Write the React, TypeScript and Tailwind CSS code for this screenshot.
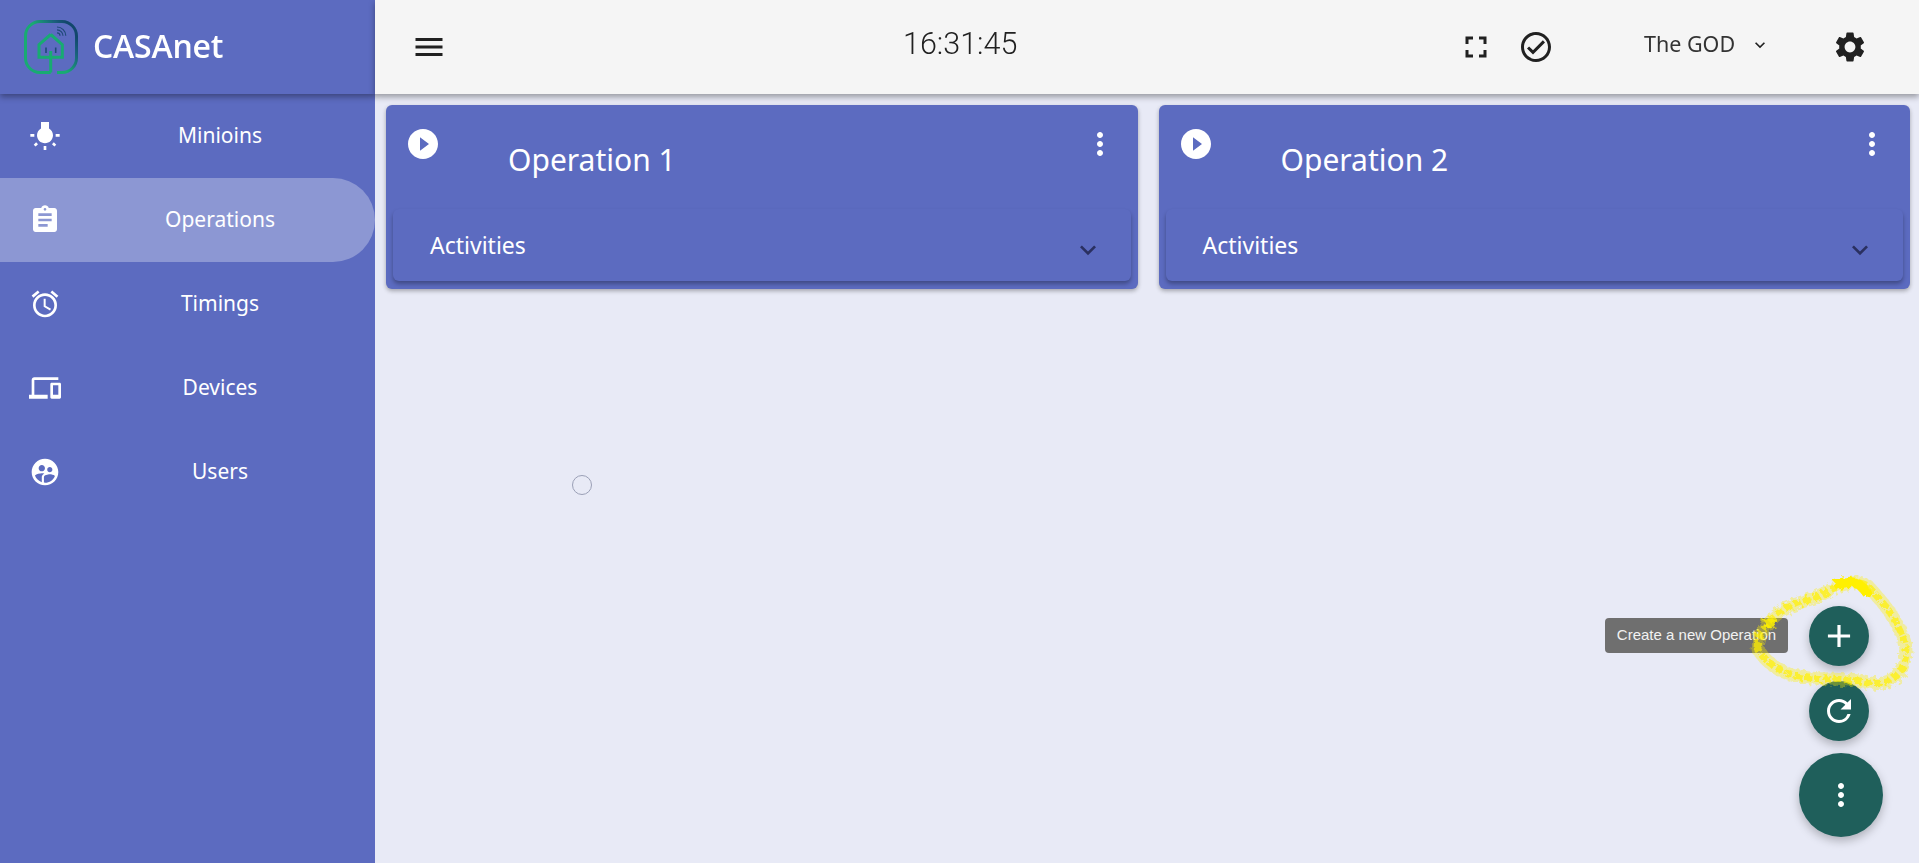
import { ReactNode } from "react";
import {
  MdAccessAlarm,
  MdAdd,
  MdAssignment,
  MdDevices,
  MdExpandMore,
  MdFullscreen,
  MdKeyboardArrowDown,
  MdMenu,
  MdMoreVert,
  MdOutlineCheckCircle,
  MdPlayCircleFilled,
  MdRefresh,
  MdSettings,
  MdSupervisedUserCircle,
  MdWbIncandescent,
} from "react-icons/md";

const NAV: { label: string; icon: ReactNode; active?: boolean }[] = [
  { label: "Minioins", icon: <MdWbIncandescent size={32} /> },
  { label: "Operations", icon: <MdAssignment size={32} />, active: true },
  { label: "Timings", icon: <MdAccessAlarm size={32} /> },
  { label: "Devices", icon: <MdDevices size={32} /> },
  { label: "Users", icon: <MdSupervisedUserCircle size={32} /> },
];

function Logo() {
  return (
    <svg width="54" height="54" viewBox="0 0 54 54" fill="none" className="shrink-0">
      <defs>
        <linearGradient id="logoRing" x1="0" y1="1" x2="1" y2="0.3">
          <stop offset="0.55" stopColor="#18ab72" />
          <stop offset="0.85" stopColor="#1a5f7c" />
          <stop offset="1" stopColor="#12476c" />
        </linearGradient>
      </defs>
      <path
        d="M26.7 52.5H16A14.5 14.5 0 0 1 1.5 38V16A14.5 14.5 0 0 1 16 1.5H38A14.5 14.5 0 0 1 52.5 16V38A14.5 14.5 0 0 1 38 52.5H33"
        stroke="url(#logoRing)"
        strokeWidth="3"
      />
      <path
        d="M26.7 14.5L38.3 24.7V37.3H26.7M26.7 14.5L15 24.7V37.3H26.7M26.7 31V52.5"
        stroke="#18ab72"
        strokeWidth="3"
      />
      <path d="M22 27.5V33M31.7 27.5V33" stroke="#1f4a78" strokeWidth="1.6" />
      <path
        d="M33 12.8a3 3 0 0 1 3 3M33 9.8a6 6 0 0 1 6 6M33 7a8.8 8.8 0 0 1 8.8 8.8"
        stroke="#1f4a78"
        strokeWidth="1.2"
      />
    </svg>
  );
}

function Sidebar() {
  return (
    <aside className="w-[375px] shrink-0 bg-[#5c6bc0] text-white flex flex-col">
      <div className="relative z-10 h-[94px] flex items-center pl-[24px] bg-[#5c6bc0] shadow-[0_3px_6px_rgba(0,0,0,0.35)]">
        <Logo />
        <span className="ml-[15px] mb-[3px] text-[32px] font-semibold font-['Open_Sans',sans-serif] tracking-[-0.2px]">
          CASAnet
        </span>
      </div>
      <nav className="flex flex-col">
        {NAV.map(item => (
          <div
            key={item.label}
            className={`h-[84px] flex items-center rounded-r-[42px] ${item.active ? "bg-[#8c97d3]" : ""}`}
          >
            <div className="w-[90px] flex justify-center">{item.icon}</div>
            <span className="w-[260px] text-center text-[21px] font-['Noto_Sans',sans-serif]">{item.label}</span>
          </div>
        ))}
      </nav>
    </aside>
  );
}

function Header() {
  return (
    <header className="relative z-10 h-[94px] bg-[#f5f5f5] text-[#212121] flex items-center shadow-[0_3px_6px_rgba(0,0,0,0.35)]">
      <MdMenu size={36} className="ml-[36px] shrink-0" />
      <span className="ml-[456px] mb-[6px] w-[116px] text-[30.5px] font-light font-['Roboto',sans-serif] whitespace-nowrap">
        16:31:45
      </span>
      <MdFullscreen size={36} className="ml-[439px] shrink-0" />
      <MdOutlineCheckCircle size={36} className="ml-[24px] shrink-0" />
      <span className="ml-[90px] mb-[6px] w-[100px] text-[21.5px] text-[#333333] font-['Noto_Sans',sans-serif] whitespace-nowrap">
        The GOD
      </span>
      <MdKeyboardArrowDown size={20} className="ml-[6px] mb-[4px] shrink-0" />
      <MdSettings size={36} className="ml-[62px] shrink-0" />
    </header>
  );
}

function OperationCard({ name }: { name: string }) {
  return (
    <div className="h-[184px] rounded-[6px] bg-[#5c6bc0] text-white flex flex-col shadow-[0_2px_4px_rgba(0,0,0,0.3)]">
      <div className="h-[104px] flex items-start justify-between pl-[19px] pr-[20px] pt-[21px]">
        <div className="flex items-start">
          <MdPlayCircleFilled size={36} className="shrink-0" />
          <span className="ml-[67px] mt-[14px] text-[30px] leading-[40px] font-['Noto_Sans',sans-serif]">{name}</span>
        </div>
        <MdMoreVert size={36} className="shrink-0" />
      </div>
      <div className="mx-[7px] h-[72px] rounded-[6px] bg-[#5c6bc0] flex items-center justify-between pl-[37px] pr-[27px] shadow-[0_3px_4px_rgba(0,0,0,0.3)]">
        <span className="text-[23px] font-['Noto_Sans',sans-serif]">Activities</span>
        <MdExpandMore size={32} className="mt-[10px] text-[#2a3060]" />
      </div>
    </div>
  );
}

function Fab({ big, children }: { big?: boolean; children: ReactNode }) {
  return (
    <div
      className={`rounded-full bg-[#1f5f5b] text-white flex items-center justify-center shadow-[0_4px_10px_rgba(0,0,0,0.25)] ${
        big ? "w-[84px] h-[84px]" : "w-[60px] h-[60px] mr-[14px]"
      }`}
    >
      {children}
    </div>
  );
}

function FabStack() {
  return (
    <div className="fixed right-[36px] bottom-[26px] flex flex-col items-end">
      <div className="relative mb-[15px]">
        <div className="absolute right-full top-[12px] mr-[21px] h-[35px] w-[183px] rounded-[4px] bg-[#6f6f6f] text-[#f2f2f2] flex items-center justify-center text-[15px] font-['Liberation_Sans',sans-serif] whitespace-nowrap">
          Create a new Operation
        </div>
        <Fab>
          <MdAdd size={38} />
        </Fab>
      </div>
      <div className="mb-[12px]">
        <Fab>
          <MdRefresh size={36} />
        </Fab>
      </div>
      <Fab big>
        <MdMoreVert size={36} />
      </Fab>
    </div>
  );
}

// marker scribble drawn over the screenshot, around the add button
function Scribble() {
  const d =
    "M1757 648C1757 640 1760 628 1780 612C1800 600 1815 600 1830 590C1845 582 1857 580 1868 586C1880 600 1892 612 1900 630C1908 646 1908 656 1900 672C1890 684 1880 686 1860 681C1835 678 1815 680 1795 676C1780 672 1765 662 1757 648Z";
  return (
    <svg className="fixed inset-0 pointer-events-none" width="1919" height="863" fill="none">
      <defs>
        <filter id="rough" x="1700" y="540" width="219" height="190" filterUnits="userSpaceOnUse">
          <feTurbulence type="fractalNoise" baseFrequency="0.22" numOctaves="2" seed="4" />
          <feDisplacementMap in="SourceGraphic" scale="8" />
        </filter>
      </defs>
      <g filter="url(#rough)" strokeLinejoin="round">
        <path d={d} stroke="#fff200" strokeWidth="13" strokeOpacity="0.35" />
        <path d={d} stroke="#fff000" strokeWidth="7" strokeOpacity="0.7" strokeDasharray="7 3" />
        <path d="M1838 584C1850 580 1860 582 1866 592" stroke="#fff000" strokeWidth="10" strokeLinecap="round" />
        <path d="M1764 624L1776 622" stroke="#fff000" strokeWidth="8" strokeOpacity="0.8" />
      </g>
    </svg>
  );
}

export default function App() {
  return (
    <div className="w-full h-[863px] flex overflow-hidden bg-[#e8eaf6]">
      <Sidebar />
      <main className="flex-1 min-w-0 flex flex-col">
        <Header />
        <div className="grid grid-cols-2 gap-[21px] pl-[11px] pr-[9px] pt-[11px]">
          <OperationCard name="Operation 1" />
          <OperationCard name="Operation 2" />
        </div>
      </main>
      <div className="fixed left-[572px] top-[475px] w-[20px] h-[20px] rounded-full border border-[#9a9fb5]" />
      <FabStack />
      <Scribble />
    </div>
  );
}
